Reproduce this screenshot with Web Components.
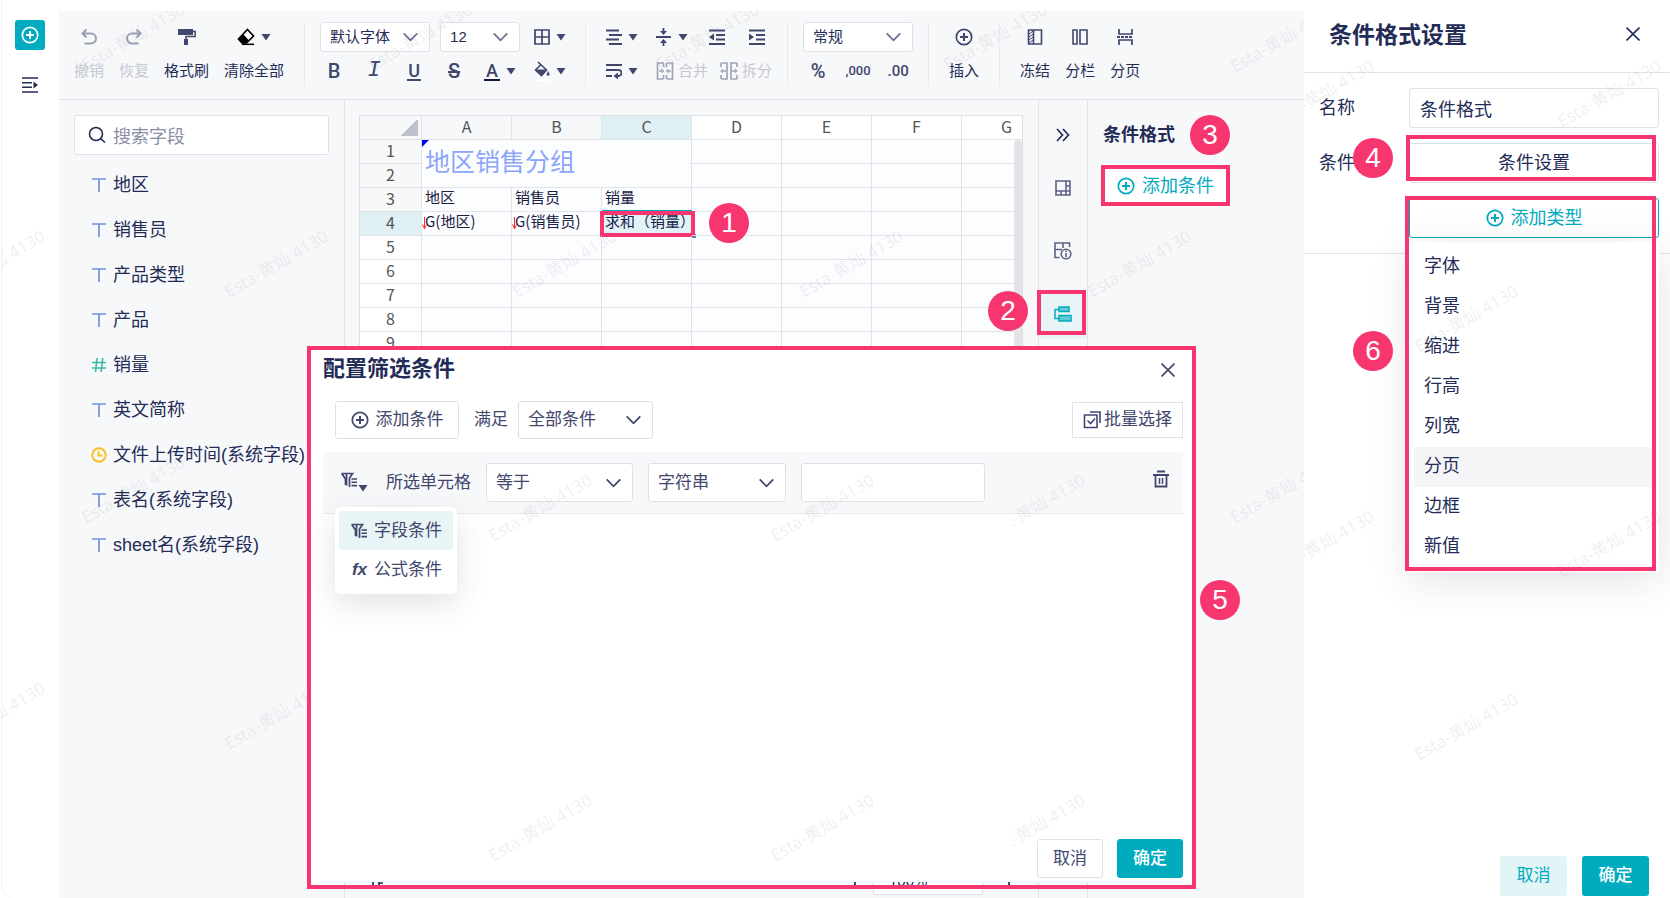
<!DOCTYPE html>
<html lang="zh-CN">
<head>
<meta charset="utf-8">
<title>条件格式设置</title>
<style>
  :root {
    --ink: #232c56;
    --icon: #40466d;
    --teal: #00abbf;
    --pink: #f7366f;
    --line: #e1e3e9;
    --box: #dfe1ea;
    --pane: #f7f8fa;
  }
  html, body { margin: 0; height: 100%; }
  body {
    font: 18px/24px "Liberation Sans", "Noto Sans CJK SC", sans-serif;
    color: var(--ink);
    background: #fff;
  }
</style>
</head>
<body>
<app-shell></app-shell>

<script>
const BASE = `
  :host, *, *::before, *::after { box-sizing: border-box; }
  button { font: inherit; color: inherit; background: none; border: 0; padding: 0; margin: 0; cursor: pointer; }
  input, select { font: inherit; color: inherit; margin: 0; outline: 0; }
`;

function define(name, css, html) {
  const tpl = document.createElement('template');
  customElements.define(name, class extends HTMLElement {
    connectedCallback() {
      if (this.shadowRoot) return;
      tpl.innerHTML = `<style>${BASE}${css}</style>${typeof html === 'function' ? html(this) : html}`;
      this.attachShadow({ mode: 'open' }).append(tpl.content.cloneNode(true));
    }
  });
}

/* ---------- icons: [width, height, markup] ---------- */
const S = 'fill="none" stroke="currentColor"';
const PLUS = `<g ${S} stroke-width="1.7"><circle cx="9" cy="9" r="7.7"/><path d="M9 5v8M5 9h8" stroke-width="2"/></g>`;
const FUNNEL = `<g ${S} stroke-width="1.7"><path d="M.5 1.500h11L8.500 6v9M.8 1.500L4.500 7v6M5.500 1.500v12"/><path d="M10.500 7h5.500M10.500 10.300h5.500M10.500 13.600h5.500" stroke-width="1.600"/></g>`;
const ICONS = {
  plus: [18, 18, PLUS],
  expand: [16, 16, `<g ${S} stroke-width="1.6"><path d="M0 1h16M0 5.700h10M0 10.300h10M0 15h16"/></g><path fill="currentColor" d="M11.500 4.500l4.500 3.500-4.500 3.500z"/>`],
  undo: [18, 18, `<path ${S} stroke-width="2" d="M6.500 1.500l-4 4 4 4M2.500 5.500H11a5 5 0 0 1 0 10H4.500"/>`],
  redo: [18, 18, `<path ${S} stroke-width="2" d="M11.500 1.500l4 4-4 4M15.500 5.500H7a5 5 0 0 0 0 10h6.500"/>`],
  brush: [18, 18, `<path fill="currentColor" d="M0 1h15v6H0zM6 11h4v6H6z"/><path ${S} stroke-width="1.5" d="M15 3.500h2.200v5H8V12"/>`],
  eraser: [18, 18, `<path fill="#fff" stroke="#000" stroke-width="1.700" d="M10.500 1.500l6 6.500-7 7H5L1.500 11z"/><path fill="#000" d="M6 6l6 6.500-3 3H5L1 11z"/><path stroke="#000" stroke-width="1.500" d="M5 16.300h12"/>`],
  caret: [10, 8, `<path fill="currentColor" d="M.5 1h9L5 7.500z"/>`],
  chevron: [15, 9, `<path ${S} stroke-width="1.800" d="M.7.8l6.800 7 6.800-7"/>`],
  grid: [16, 16, `<path ${S} stroke-width="1.700" d="M1 1h14v14H1zM8 1v14M1 8h14"/>`],
  bucket: [16, 20, `<path fill="currentColor" d="M2 8.500h11L7.500 15 1 9z"/><path ${S} stroke-width="1.600" d="M4 1l8.500 8L7.500 14.500 1.500 9 6.500 4"/><path fill="currentColor" d="M14 10c1 2 2 3 1.500 4.500h-3C12.500 13 13.500 12 14 10z"/><path fill="#fff" d="M1 18h15v2H1z"/>`],
  align: [16, 16, `<path ${S} stroke-width="1.800" d="M0 1.500h13M3 6h13M0 10.500h13M3 15h13"/>`],
  valign: [16, 18, `<path ${S} stroke-width="1.800" d="M0 9h15M7.500 0v5M7.500 13v5"/><path fill="currentColor" d="M4 3h7L7.500 7zM4 15h7l-3.500-4z"/>`],
  outdent: [16, 16, `<path ${S} stroke-width="1.800" d="M0 1.500h16M7 6h9M7 10.500h9M0 15h16"/><path fill="currentColor" d="M5 4.500v7L0 8z"/>`],
  indent: [16, 16, `<path ${S} stroke-width="1.800" d="M0 1.500h16M7 6h9M7 10.500h9M0 15h16"/><path fill="currentColor" d="M0 4.500v7L5 8z"/>`],
  wrap: [16, 16, `<path ${S} stroke-width="1.800" d="M0 2h16M0 7h12.500a3 3 0 0 1 0 6H10M0 13h6"/><path fill="currentColor" d="M12 9.500v7L7.500 13z"/>`],
  merge: [18, 18, `<g ${S} stroke-width="1.700"><path d="M7.500 1H1.500v16h6M10.500 1h6v16h-6M7.500 1v4M7.500 13v4M10.500 1v4M10.500 13v4M3 9h4M15 9h-4"/></g><path fill="currentColor" d="M5.500 6.500v5L8.200 9zM12.500 6.500v5L9.800 9z"/>`],
  split: [18, 18, `<g ${S} stroke-width="1.700"><path d="M1 1h6v16H1M17 1h-6v16h6M1 1v4M1 13v4M17 1v4M17 13v4M2 9h4M16 9h-4"/></g><path fill="currentColor" d="M3 6.500v5L.3 9zM15 6.500v5L17.700 9z"/>`],
  freeze: [16, 16, `<path ${S} stroke-width="1.600" d="M1.500 1h13v14h-13zM6.500 1v14"/><path ${S} d="M2 5l4-3M2 8l4-3M2 11l4-3M2 14l4-3"/>`],
  columns: [16, 16, `<path ${S} stroke-width="1.600" d="M1 1h4v14H1zM8 1h7v14H8z"/>`],
  pages: [16, 16, `<path ${S} stroke-width="1.700" d="M2 0v5h13V0M2 16v-5h13v5"/><path ${S} stroke-width="1.800" stroke-dasharray="3 1" d="M0 8h16"/>`],
  search: [18, 18, `<g ${S} stroke-width="1.600"><circle cx="8" cy="8" r="6.500"/><path d="M12.500 12.500l4.500 4"/></g>`],
  text: [14, 16, `<path fill="none" stroke="#6f93df" stroke-width="1.700" d="M0 2h14M7 2v13"/>`],
  number: [14, 16, `<path fill="none" stroke="#3eb8a5" stroke-width="1.600" d="M0 5.500h14M0 11h14M5 1L3.500 15M10.700 1L9.200 15"/>`],
  time: [16, 16, `<g fill="none" stroke="#fabf1c" stroke-width="1.900"><circle cx="8" cy="8" r="6.700"/><path d="M7.500 4v4.500h4"/></g>`],
  arrows: [14, 14, `<path ${S} stroke-width="1.700" d="M1 1l5.500 6L1 13M7 1l5.500 6L7 13"/>`],
  layout: [16, 16, `<path ${S} stroke-width="1.600" d="M1 1h14v14H1zM1 11h14M11 1v14M11 6h4M6 11v4"/>`],
  gridinfo: [18, 18, `<g ${S} stroke-width="1.600"><path d="M5.500 15.500H1V1h14.500v4M1 7.500h7M9 1v5"/><circle cx="12" cy="12" r="4.800"/><path d="M12 11v4M12 8.500v1.500"/></g>`],
  rules: [18, 16, `<path fill="#62c9d5" stroke="currentColor" stroke-width="1.500" d="M5 1h10v4.500H5zM5 9.500h12V15H5z"/><path ${S} stroke-width="1.500" d="M5 3.500H1v9h4"/>`],
  close: [14, 14, `<path ${S} stroke-width="1.600" d="M.5.5l13 13M13.500.5l-13 13"/>`],
  batch: [18, 18, `<g ${S} stroke-width="1.600"><path d="M1.500 4h12.500v12.500H1.500zM7 1h10v11"/><path d="M4.500 9.500l3 3 4.500-5"/></g>`],
  filter: [17, 16, FUNNEL],
  trash: [16, 18, `<g ${S} stroke-width="1.800"><path d="M4 1.500h8M0 5h16M2.500 5v11.500h11V5"/><path d="M6.500 8v6M9.500 8v6" stroke-width="1.500"/></g>`],
  tabs: [14, 14, `<path ${S} stroke-width="1.700" d="M3 13V7h6v6M9 10h4"/>`],
  zoomer: [14, 14, `<path ${S} stroke-width="1.700" d="M1 13h4M11 8v6"/>`],
};
define('ui-icon', `:host{display:inline-flex;flex:none} svg{display:block}`, el => {
  const [w, h, body] = ICONS[el.getAttribute('name')];
  return `<svg width="${w}" height="${h}" viewBox="0 0 ${w} ${h}" aria-hidden="true">${body}</svg>`;
});

/* ---------- small shared pieces ---------- */
define('step-badge', `
  :host{position:absolute;z-index:5;width:40px;height:40px;border-radius:50%;background:var(--pink);color:#fff;
    font:28px/40px "Liberation Sans",sans-serif;text-align:center}`, `<slot></slot>`);

define('water-mark', `
  :host{position:absolute;inset:0;overflow:hidden;pointer-events:none;z-index:2}
  svg{display:block;width:100%;height:100%}
  text{font:17px "Noto Sans","Noto Sans CJK SC",sans-serif;fill:#5a5c66;fill-opacity:.1}`,
  el => `<svg aria-hidden="true">${el.getAttribute('at').split(' ').map(p => {
    const [x, y] = p.split(',');
    return `<text transform="translate(${x} ${y}) rotate(-30)">Esta-黄灿 4130</text>`;
  }).join('')}</svg>`);

define('ui-select', `
  :host{display:block;flex:none;position:relative;height:30px;width:110px}
  select{appearance:none;display:block;width:100%;height:100%;padding:0 32px 0 9px;background:#fff;
    border:1px solid var(--box);border-radius:3px}
  ui-icon{position:absolute;right:12px;top:50%;transform:translateY(-50%);pointer-events:none;color:var(--chevron,#6b7090)}`,
  el => `<select aria-label="${el.getAttribute('label')}"><option>${el.getAttribute('value')}</option></select><ui-icon name="chevron"></ui-icon>`);

define('tool-item', `
  :host{display:block;flex:none}
  button{display:grid;grid-template-rows:30px 30px;row-gap:4px;justify-items:center;align-items:center;white-space:nowrap}
  span{display:flex;align-items:center;gap:6px;color:var(--icon)}
  :host([off]) button{color:#c6c8d4} :host([off]) span{color:#9c9fb6}`,
  el => `<button><span><ui-icon name="${el.getAttribute('icon')}"></ui-icon>${el.hasAttribute('menu') ? '<ui-icon name="caret"></ui-icon>' : ''}</span><slot></slot></button>`);

/* ---------- left rail ---------- */
define('side-rail', `
  :host{display:flex;flex-direction:column;align-items:center;gap:20px;flex:none;width:58px;margin-left:1px;padding:20px 0 0;
    border-left:1px solid #f0f0f2;border-bottom-left-radius:12px;background:#fff}
  button{width:30px;height:30px;display:grid;place-items:center;border-radius:3px;margin-right:2px}
  .new{background:var(--teal);color:#fff}`,
  `<button class="new" aria-label="新建"><ui-icon name="plus"></ui-icon></button>
   <button aria-label="展开"><ui-icon name="expand"></ui-icon></button>`);

/* ---------- toolbar ---------- */
define('tool-bar', `
  :host{display:flex;flex:none;padding:11px 0 13px;border-bottom:1px solid var(--line);font-size:15px}
  .group{display:flex;gap:15px;padding:0 20px;border-right:1px solid #e8eaee}
  .first{padding-left:15px}
  .group:last-child{border:0}
  .form{flex-direction:column;gap:4px;padding:0 15px}
  .para{padding-left:20px}
  .row{display:flex;height:30px;align-items:center;color:var(--icon)}
  .row ui-select{color:var(--ink)}
  .g10{gap:10px}.g12{gap:12px}.g18{gap:18px}
  button{display:flex;align-items:center;justify-content:center;height:30px;gap:6px;flex:none}
  .w22{width:22px}.w28{width:28px}.w30{width:30px}.w32{width:32px}.w36{width:36px}.w40{width:40px}
  .w80{width:80px}
  .big{font:500 20px/24px Roboto,sans-serif}
  .it{font:italic 22px/24px "Liberation Mono",monospace}
  .small{font:500 13px/24px Roboto,sans-serif}
  .mid{font:500 15px/24px Roboto,sans-serif}
  .u span{border-bottom:2px solid;font:500 18px/17px Roboto,sans-serif;padding:0 1px}
  .a span{border-bottom:2px solid #14183f;font:500 18px/17px Roboto,sans-serif;padding:0 2px}
  .off{color:#c6c8d4;gap:4px}.off ui-icon{color:#a2a4b9}`,
  `<div class="group first">
     <tool-item icon="undo" off>撤销</tool-item><tool-item icon="redo" off>恢复</tool-item>
     <tool-item icon="brush">格式刷</tool-item><tool-item icon="eraser" menu>清除全部</tool-item>
   </div>
   <div class="group form">
     <div class="row g10"><ui-select label="字体" value="默认字体"></ui-select><ui-select class="w80" label="字号" value="12"></ui-select>
       <button class="w40" aria-label="边框"><ui-icon name="grid"></ui-icon><ui-icon name="caret"></ui-icon></button></div>
     <div class="row g12">
       <button class="w28 big">B</button><button class="w28 it">I</button>
       <button class="w28 u"><span>U</span></button><button class="w28 big"><s>S</s></button>
       <button class="w40 a"><span>A</span><ui-icon name="caret"></ui-icon></button>
       <button class="w36" aria-label="填充"><ui-icon name="bucket"></ui-icon><ui-icon name="caret"></ui-icon></button></div>
   </div>
   <div class="group form para">
     <div class="row g18"><button class="w32" aria-label="水平对齐"><ui-icon name="align"></ui-icon><ui-icon name="caret"></ui-icon></button>
       <button class="w32" aria-label="垂直对齐"><ui-icon name="valign"></ui-icon><ui-icon name="caret"></ui-icon></button>
       <button class="w22" aria-label="减少缩进"><ui-icon name="outdent"></ui-icon></button>
       <button class="w22" aria-label="增加缩进"><ui-icon name="indent"></ui-icon></button></div>
     <div class="row g18"><button class="w32" aria-label="换行"><ui-icon name="wrap"></ui-icon><ui-icon name="caret"></ui-icon></button>
       <div class="row g12"><button class="off"><ui-icon name="merge"></ui-icon>合并</button><button class="off"><ui-icon name="split"></ui-icon>拆分</button></div></div>
   </div>
   <div class="group form">
     <div class="row"><ui-select label="数字格式" value="常规"></ui-select></div>
     <div class="row g10"><button class="w30 big">%</button><button class="w30 small">,000</button><button class="w30 mid">.00</button></div>
   </div>
   <div class="group"><tool-item icon="plus">插入</tool-item></div>
   <div class="group"><tool-item icon="freeze">冻结</tool-item><tool-item icon="columns">分栏</tool-item><tool-item icon="pages">分页</tool-item></div>`);

/* ---------- field list ---------- */
const FIELDS = [['text', '地区'], ['text', '销售员'], ['text', '产品类型'], ['text', '产品'], ['number', '销量'], ['text', '英文简称'],
  ['time', '文件上传时间(系统字段)'], ['text', '表名(系统字段)'], ['text', 'sheet名(系统字段)']];
define('field-list', `
  :host{display:block;flex:none;width:286px;padding:15px;border-right:1px solid var(--line)}
  label{display:flex;align-items:center;gap:7px;width:255px;height:40px;padding:0 14px 0 13px;background:#fff;border:1px solid var(--box);border-radius:3px}
  input{border:0;background:none;min-width:0;flex:1;padding:4px 0 0}
  input::placeholder{color:#8b8fa6;opacity:1}
  ul{list-style:none;margin:7px 0 0;padding:0}
  li{display:flex;align-items:center;height:45px;padding-left:17px;gap:6px;white-space:nowrap}
  li ui-icon{width:16px;justify-content:center}`,
  `<label><ui-icon name="search"></ui-icon><input placeholder="搜索字段" aria-label="搜索字段"></label>
   <ul>${FIELDS.map(([t, n]) => `<li><ui-icon name="${t}"></ui-icon><span>${n}</span></li>`).join('')}</ul>`);

/* ---------- spreadsheet ---------- */
const COLS = ['A', 'B', 'C', 'D', 'E', 'F', 'G'];
const TICK = `<svg class="tick" width="6" height="16" viewBox="0 0 6 16" aria-hidden="true"><path fill="none" stroke="#f33" d="M2.500 1v11M.5 8.500l2 4.500 2-4.500"/></svg>`;
const empty = n => '<td></td>'.repeat(n);
const ROWS = [
  `<td class="title" rowspan="2" colspan="3">地区销售分组</td>${empty(4)}`,
  empty(4),
  `<td>地区</td><td>销售员</td><td>销量</td>${empty(4)}`,
  `<td>${TICK}G(地区)</td><td>${TICK}G(销售员)</td><td class="picked">求和（销量）</td>${empty(4)}`,
  ...Array(5).fill(empty(7)),
];
define('sheet-grid', `
  :host{display:flex;flex-direction:column;flex:1;min-width:0;padding:15px 15px 3px 14px}
  .view{flex:1;position:relative;overflow:hidden;border:1px solid #dde0e5;background:#fcfdff;min-height:0}
  table{table-layout:fixed;width:692px;border-collapse:separate;border-spacing:0;font:15px/20px "Noto Sans CJK SC",sans-serif;color:#1b2145}
  th,td{height:24px;padding:0;border:solid #e1e3e7;border-width:0 1px 1px 0;vertical-align:top}
  th{font-weight:400;font-size:16px;color:#555;background:#fff}
  td{padding-left:3px;text-align:left;white-space:nowrap;position:relative;line-height:18px}
  .soft{background:var(--pane)} .hot{background:#def0f4}
  .corner{background:linear-gradient(135deg,transparent 50%,#bfc1cf 50%) no-repeat right 3px bottom 3px/17px 17px var(--pane)}
  .title{font-size:25px;line-height:40px;color:#8da5f7}
  .title::before{content:"";position:absolute;left:0;top:0;border:solid transparent;border-width:0 7px 7px 0;border-top:7px solid #00f;border-bottom:0;border-left:0}
  .tick{position:absolute;left:0;top:4px}
  .picked{background:#e0f4f8;box-shadow:0 -2px 0 var(--teal)}
  .picked::after{content:"";position:absolute;left:-2px;right:-4px;top:-1px;bottom:-2px;border:4px solid var(--pink)}
  .picked::before{content:"";position:absolute;right:-5px;bottom:-3px;width:4px;height:4px;background:#4c86f5}
  step-badge{left:349px;top:87px}
  .bar{position:absolute;right:0;top:24px;bottom:0;width:8px;border-radius:4px;background:#e2e4e8}
  .status{flex:none;display:flex;align-items:center;gap:15px;height:30px;margin-top:8px;padding:0 11px;font-size:15px}
  .status ui-icon:nth-child(2){margin-left:auto}
  input{width:110px;height:30px;border:1px solid var(--box);border-radius:3px;padding:0 15px;background:#fff}`,
  `<div class="view">
     <table>
       <colgroup><col style="width:62px">${'<col style="width:90px">'.repeat(7)}</colgroup>
       <thead><tr><th class="corner"></th>${COLS.map((c, i) => `<th scope="col" class="${i < 2 ? 'soft' : i === 2 ? 'hot' : ''}">${c}</th>`).join('')}</tr></thead>
       <tbody>${ROWS.map((r, i) => `<tr><th scope="row" class="${i < 3 ? 'soft' : i === 3 ? 'hot' : ''}">${i + 1}</th>${r}</tr>`).join('')}</tbody>
     </table>
     <div class="bar"></div>
     <step-badge>1</step-badge>
   </div>
   <div class="status"><ui-icon name="tabs"></ui-icon><ui-icon name="zoomer"></ui-icon><input value="100%" aria-label="缩放"><ui-icon name="zoomer"></ui-icon></div>`);

/* ---------- icon strip ---------- */
define('icon-strip', `
  :host{display:flex;flex-direction:column;gap:13px;flex:none;width:50px;padding-top:10px;border:solid var(--line);border-width:0 1px;position:relative}
  button{height:50px;display:grid;place-items:center;color:#5d6286}
  .fold{height:40px;padding-bottom:0;margin-top:5px;color:var(--ink)}
  .fold + button{margin-top:-5px}
  .on{background:#e9f4f6;color:var(--teal)}
  .frame{position:absolute;left:-2px;right:1px;top:190px;height:45px;border:4px solid var(--pink)}
  step-badge{left:-51px;top:191px}`,
  `<button class="fold" aria-label="收起"><ui-icon name="arrows"></ui-icon></button>
   <button aria-label="布局"><ui-icon name="layout"></ui-icon></button>
   <button aria-label="单元格信息"><ui-icon name="gridinfo"></ui-icon></button>
   <button class="on" aria-label="条件格式"><ui-icon name="rules"></ui-icon></button>
   <div class="frame"></div><step-badge>2</step-badge>`);

/* ---------- conditional rules ---------- */
define('rule-panel', `
  :host{display:block;flex:none;width:216px;padding:15px 13px;position:relative}
  h2{font-size:18px;line-height:40px;margin:0 2px 10px}
  button{display:flex;align-items:center;justify-content:center;gap:7px;width:129px;height:41px;background:#fff;border:4px solid var(--pink);color:var(--teal)}
  step-badge{left:102px;top:15px}`,
  `<h2>条件格式</h2><button><ui-icon name="plus"></ui-icon>添加条件</button><step-badge>3</step-badge>`);

/* ---------- filter dialog ---------- */
define('filter-dialog', `
  :host{position:absolute;z-index:3;left:248px;right:108px;top:335px;bottom:9px;border:4px solid var(--pink);padding-bottom:3px;
    font-size:17px;color:var(--icon);--chevron:#40466d}
  .body{position:relative;display:flex;flex-direction:column;height:100%;background:#fff;padding:0 9px 4px 12px}
  header{display:flex;align-items:center;justify-content:space-between;height:38px;padding-right:8px}
  header button{padding-top:6px}
  h2{margin:0;font-size:22px;line-height:38px;color:var(--ink)}
  .top{display:flex;align-items:center;gap:15px;margin-top:13px;height:38px;padding-left:12px}
  .btn{display:flex;align-items:center;justify-content:center;gap:7px;height:38px;width:124px;border:1px solid var(--box);border-radius:3px;background:#fff;white-space:nowrap}
  .pair{display:flex;align-items:center;gap:10px}
  .batch{width:111px;height:36px;gap:3px;margin-left:auto;border-radius:0}
  .w135{width:135px;height:38px}.w147{width:147px;height:39px}.w138{width:138px;height:39px}
  .rule{position:relative;display:flex;align-items:center;gap:15px;height:62px;margin-top:13px;padding:0 14px 0 18px;background:var(--pane);border-bottom:1px solid #e8eaef}
  .kind{display:flex;width:30px;align-items:flex-end;padding-bottom:5px}
  .kind ui-icon+ui-icon{margin-bottom:-4px}
  input{width:184px;height:39px;border:1px solid var(--box);border-radius:3px;background:#fff;padding:0 9px}
  .del{margin-left:auto}
  ul{position:absolute;z-index:4;left:12px;top:55px;width:122px;margin:0;padding:4px 4px 5px;list-style:none;background:#fff;border-radius:5px;box-shadow:0 10px 30px rgba(60,60,80,.14)}
  li button{display:flex;align-items:center;gap:6px;width:100%;height:39px;padding-left:12px;border-radius:3px;white-space:nowrap}
  li:first-child button{background:#e9f4f6}
  em{width:17px;font:italic 700 17px/24px "Liberation Sans",sans-serif}
  footer{display:flex;justify-content:flex-end;gap:14px;margin-top:auto}
  footer .btn{width:66px;height:39px}
  .ok{background:var(--teal);border-color:var(--teal);color:#fff;font-weight:500}
  .cut{left:701px}
  step-badge{right:-48px;top:230px}`,
  `<div class="body" role="dialog" aria-label="配置筛选条件">
     <header><h2>配置筛选条件</h2><button aria-label="关闭"><ui-icon name="close"></ui-icon></button></header>
     <div class="top"><button class="btn"><ui-icon name="plus"></ui-icon>添加条件</button>
       <div class="pair"><span>满足</span><ui-select class="w135" label="满足" value="全部条件"></ui-select></div>
       <button class="btn batch"><ui-icon name="batch"></ui-icon>批量选择</button></div>
     <div class="rule"><button class="kind" aria-label="条件类型"><ui-icon name="filter"></ui-icon><ui-icon name="caret"></ui-icon></button>
       <span>所选单元格</span><ui-select class="w147" label="运算" value="等于"></ui-select><ui-select class="w138" label="类型" value="字符串"></ui-select>
       <input aria-label="值"><button class="del" aria-label="删除"><ui-icon name="trash"></ui-icon></button>
       <ul><li><button><ui-icon name="filter"></ui-icon>字段条件</button></li><li><button><em>fx</em>公式条件</button></li></ul></div>
     <footer><button class="btn">取消</button><button class="btn ok">确定</button></footer>
     <water-mark at="182,192 464,192 182,512 464,512"></water-mark>
     <water-mark class="cut" at="-26,192 -26,512"></water-mark>
   </div>
   <step-badge>5</step-badge>`);

/* ---------- right panel ---------- */
const TYPES = ['字体', '背景', '缩进', '行高', '列宽', '分页', '边框', '新值'];
define('format-panel', `
  :host{display:flex;flex-direction:column;flex:none;width:366px;background:#fff;position:relative;overflow:hidden}
  header{display:flex;align-items:center;justify-content:space-between;height:73px;padding:0 30px 3px 25px;border-bottom:1px solid var(--line)}
  h1{font-size:23px;line-height:30px;margin:0}
  form{display:grid;grid-template-columns:90px 1fr;row-gap:15px;align-items:center;padding:15px 11px 15px 15px;border-bottom:1px solid var(--line);position:relative}
  input,.btn{width:100%;height:40px;border:1px solid var(--box);border-radius:3px;background:#fff;padding:0 10px}
  .btn{display:flex;align-items:center;justify-content:center;gap:7px}
  .cell{grid-column:2;position:relative}
  .add{border-color:var(--teal);color:var(--teal)}
  ul{position:absolute;left:0;right:0;top:44px;margin:0;padding:5px;list-style:none;background:#fff;border-radius:4px;box-shadow:0 8px 40px rgba(60,60,80,.14)}
  li button{display:block;width:100%;height:40px;padding:0 10px 2px;text-align:left;border-radius:3px}
  .on{background:#f5f5f8}
  .frame{position:absolute;z-index:4;border:4px solid var(--pink)}
  .f4{left:-3px;right:3px;top:-8px;height:46px}
  .f6{left:-4px;right:3px;top:-2px;height:375px}
  .b4{left:49px;top:65px}.b6{left:49px;top:258px}
  footer{display:flex;justify-content:flex-end;gap:15px;margin-top:auto;padding:0 21px 2px}
  footer button{width:67px;height:40px;border-radius:3px;background:#e1f5f7;color:var(--teal);font-size:17px}
  footer .ok{background:var(--teal);color:#fff;font-weight:500}`,
  `<header><h1>条件格式设置</h1><button aria-label="关闭"><ui-icon name="close"></ui-icon></button></header>
   <form onsubmit="return false">
     <label for="name">名称</label><input id="name" value="条件格式">
     <span>条件</span><div class="cell"><button class="btn" type="button">条件设置</button><div class="frame f4"></div></div>
     <div class="cell"><button class="btn add" type="button"><ui-icon name="plus"></ui-icon>添加类型</button>
       <ul>${TYPES.map(t => `<li><button type="button"${t === '分页' ? ' class="on"' : ''}>${t}</button></li>`).join('')}</ul>
       <div class="frame f6"></div></div>
     <step-badge class="b4">4</step-badge><step-badge class="b6">6</step-badge>
   </form>
   <footer><button>取消</button><button class="ok">确定</button></footer>
   <water-mark at="-29,128 258,128 115,353 -29,578 258,578 115,761"></water-mark>`);

/* ---------- page ---------- */
define('app-shell', `
  :host{display:flex;min-height:100vh}
  .left{display:flex;flex:1;min-width:0;position:relative}
  main{display:flex;flex-direction:column;flex:1;min-width:0;margin-top:11px;background:var(--pane);position:relative}
  .cols{display:flex;flex:1;min-height:0}
  .marks{position:absolute;inset:11px 0 0 2px;pointer-events:none}`,
  `<div class="left">
     <side-rail></side-rail>
     <main>
       <tool-bar></tool-bar>
       <div class="cols"><field-list></field-list><sheet-grid></sheet-grid><icon-strip></icon-strip><rule-panel></rule-panel></div>
       <filter-dialog></filter-dialog>
     </main>
     <div class="marks"><water-mark at="84,60 371,60 658,60 946,60 1233,62 -56,287 227,287 515,287 802,287 1090,287 84,513 1233,513 -56,739 227,739"></water-mark></div>
   </div>
   <format-panel></format-panel>`);
</script>
</body>
</html>
